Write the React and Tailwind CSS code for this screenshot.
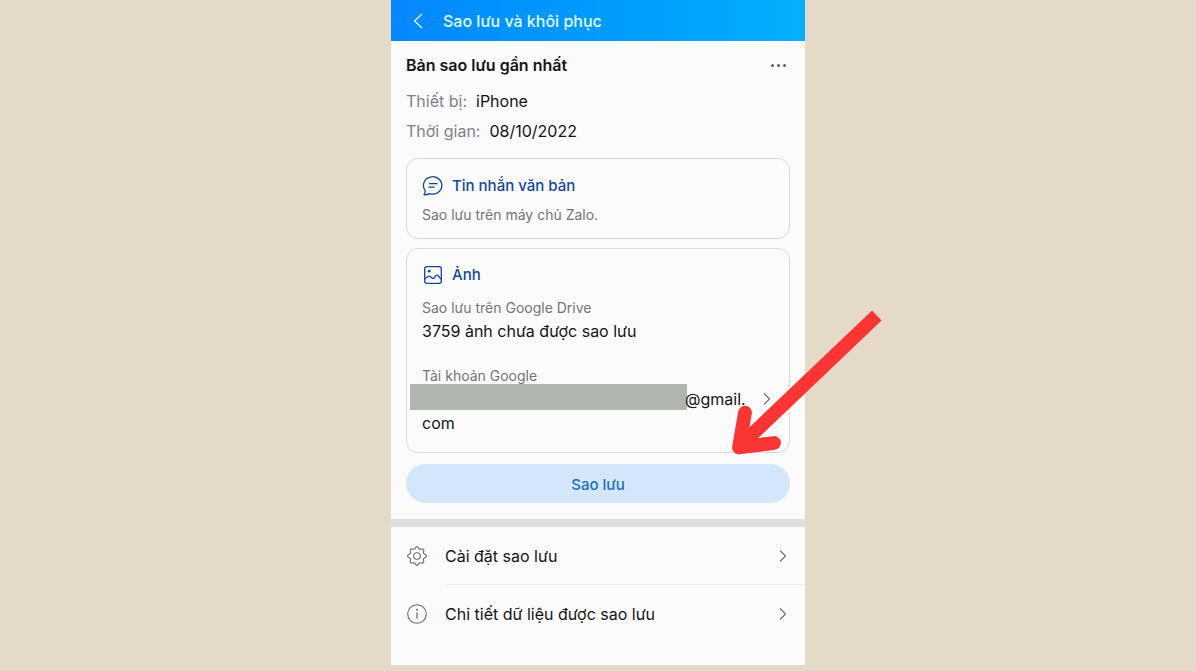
import React from 'react'

function Chevron({ className }) {
  return (
    <svg viewBox="0 0 8 14" className={className} fill="none" stroke="currentColor" strokeWidth="1.1" aria-hidden="true">
      <path d="M1 1.5 6.5 7 1 12.5" />
    </svg>
  )
}

function MessageIcon() {
  return (
    <svg viewBox="0 0 22 22" className="h-[22px] w-[22px]" fill="none" stroke="currentColor" strokeWidth="1.3" strokeLinecap="round" strokeLinejoin="round" aria-hidden="true">
      <path d="M3 15.3A9.2 8.7 0 1 1 7.400 18.600c-1.500 .9-3.400 1.300-5.400 1.100 1-1.300 1.400-2.700 1-4.400Z" />
      <path d="M7.500 8.700h7.500M7 12.200h5" />
    </svg>
  )
}

function PhotoIcon() {
  return (
    <svg viewBox="0 0 22 22" className="h-[22px] w-[22px]" fill="none" stroke="currentColor" strokeWidth="1.3" strokeLinecap="round" strokeLinejoin="round" aria-hidden="true">
      <rect x="2.700" y="2.700" width="16.600" height="16.600" rx="2.200" />
      <circle cx="7.200" cy="7.200" r="1.400" fill="currentColor" stroke="none" />
      <path d="M2.700 15c1.500-.5 2.600-2.900 4.300-2.900s2.500 2.600 4.200 2.400 2-3.400 3.800-3.400 2.600 3.600 4.300 4.100" />
    </svg>
  )
}

function GearIcon() {
  return (
    <svg viewBox="0 0 22 22" className="h-[22px] w-[22px]" fill="none" stroke="currentColor" strokeWidth="1.1" strokeLinejoin="round" aria-hidden="true">
      <path d="M11 1.500c1.300 0 1.500 2.200 2.600 2.700s2.900-.9 3.900 0-.5 2.700 0 3.900 3 1.500 3 2.900-2.500 1.700-3 2.900.9 2.900 0 3.900-2.800-.5-3.900 0-1.300 2.700-2.600 2.700-1.500-2.200-2.600-2.700-2.900.9-3.900 0 .5-2.700 0-3.900-3-1.500-3-2.900 2.500-1.700 3-2.900-.9-2.900 0-3.900 2.800.5 3.900 0S9.700 1.500 11 1.500Z" />
      <circle cx="11" cy="11" r="3.300" />
    </svg>
  )
}

function InfoIcon() {
  return (
    <svg viewBox="0 0 22 22" className="h-[22px] w-[22px]" fill="none" stroke="currentColor" strokeWidth="1.1" aria-hidden="true">
      <circle cx="11" cy="11" r="9.300" />
      <path d="M11 9.500v6" strokeWidth="1.300" />
      <circle cx="11" cy="6.800" r="1" fill="currentColor" stroke="none" />
    </svg>
  )
}

function Arrow() {
  return (
    <svg viewBox="0 0 152 146" className="pointer-events-none absolute top-[310px] left-[340px] h-[146px] w-[152px]" fill="none" stroke="#fb3434" strokeWidth="13.800" strokeLinecap="round" strokeLinejoin="round" aria-hidden="true">
      <path d="M145.800 5.500 13 132" strokeLinecap="butt" />
      <path d="M14 102.600 8 137.500l35-4.500" />
    </svg>
  )
}

function SettingRow({ icon, label, divider }) {
  return (
    <button type="button" className="flex h-[58px] w-full items-stretch pl-[15px] text-left">
      <span className="flex w-[39px] items-center text-[#6b6b6b]">{icon}</span>
      <span className={divider ? 'flex flex-1 items-center justify-between border-b border-[#ededed] pr-[18px]' : 'flex flex-1 items-center justify-between pr-[18px]'}>
        <span className="text-base leading-6">{label}</span>
        <Chevron className="h-[14px] w-2 text-[#6b6b6b]" />
      </span>
    </button>
  )
}

export default function App() {
  return (
    <div className="min-h-screen bg-[#e5dac7] font-['Inter','Liberation_Sans',sans-serif] text-[#141414]">
      <main className="relative mx-auto w-full max-w-[414px] bg-[#fbfbfb] pb-[22px]">
        <header className="flex h-[41px] items-center bg-linear-to-r from-[#0687ff] to-[#04affd] pl-[22px] text-[#e2fbff]">
          <button type="button" aria-label="Quay lại" className="mr-5 flex">
            <svg viewBox="0 0 10 16" className="h-4 w-[10px]" fill="none" stroke="currentColor" strokeWidth="1.3" aria-hidden="true">
              <path d="M9 1 1.500 8 9 15" />
            </svg>
          </button>
          <h1 className="text-base leading-6 font-medium">Sao lưu và khôi phục</h1>
        </header>

        <section className="px-[15px] pt-3 pb-4">
          <div className="flex items-center justify-between">
            <h2 className="text-base leading-6 font-semibold">Bản sao lưu gần nhất</h2>
            <button type="button" aria-label="Tùy chọn" className="mr-1 flex gap-[3px] text-[#5c5c5c]">
              <span className="size-[3px] rounded-full bg-current" />
              <span className="size-[3px] rounded-full bg-current" />
              <span className="size-[3px] rounded-full bg-current" />
            </button>
          </div>
          <dl className="mt-3 flex flex-col gap-[6px] text-base leading-6">
            <div className="flex gap-[9px]">
              <dt className="text-[#7d828a]">Thiết bị:</dt>
              <dd>iPhone</dd>
            </div>
            <div className="flex gap-[9px]">
              <dt className="text-[#7d828a]">Thời gian:</dt>
              <dd>08/10/2022</dd>
            </div>
          </dl>

          <div className="mt-[15px] rounded-xl border border-[#d9dadb] px-[15px] pt-[15px] pb-[13px]">
            <h3 className="flex items-center gap-2 text-[15px] leading-6 font-medium text-[#12479a]">
              <MessageIcon />
              Tin nhắn văn bản
            </h3>
            <p className="mt-[7px] text-sm leading-5 text-[#747474]">Sao lưu trên máy chủ Zalo.</p>
          </div>

          <div className="mt-[9px] rounded-xl border border-[#d9dadb] px-[15px] pt-[14px] pb-[17px]">
            <h3 className="flex items-center gap-2 text-[15px] leading-6 font-medium text-[#12479a]">
              <PhotoIcon />
              Ảnh
            </h3>
            <p className="mt-[11px] text-sm leading-5 text-[#747474]">Sao lưu trên Google Drive</p>
            <p className="mt-px text-base leading-6">3759 ảnh chưa được sao lưu</p>
            <p className="mt-[23px] text-sm leading-5 text-[#747474]">Tài khoản Google</p>
            <button type="button" className="mt-px block w-full text-left text-base leading-6">
              <span className="flex h-6 items-center">
                <span className="-mt-1 -mr-0.5 -ml-3 h-[26px] w-[277px] shrink-0 bg-[#b0b6af]" />
                @gmail.
                <Chevron className="mr-[3px] ml-auto h-[14px] w-2 text-[#6b6b6b]" />
              </span>
              com
            </button>
          </div>

          <button type="button" className="mt-[11px] h-[39px] w-full rounded-full bg-[#d4e6fa] pt-0.5 text-[15px] leading-6 font-medium text-[#1a6fc4]">
            Sao lưu
          </button>
        </section>

        <div className="h-2 bg-[#dddfe0]" />

        <nav>
          <SettingRow icon={<GearIcon />} label="Cài đặt sao lưu" divider />
          <SettingRow icon={<InfoIcon />} label="Chi tiết dữ liệu được sao lưu" />
        </nav>

        <Arrow />
      </main>
    </div>
  )
}
